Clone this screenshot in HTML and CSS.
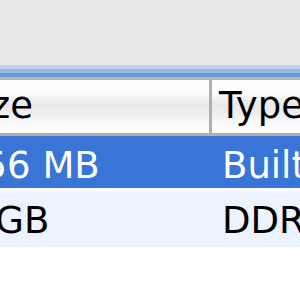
FILE: index.html
```html
<!doctype html>
<html lang="en">
    <head>
        <meta charset="UTF-8" />
        <title>Memory</title>
        <link rel="stylesheet" href="styles.css">
    </head>
    <body>
        <div class="window">
            <div class="toolbar"></div>
            <div class="focus-ring"></div>
            <div class="table">
                <div class="thead">
                    <div class="th size">Size</div>
                    <div class="th">Type</div>
                </div>
                <div class="row selected">
                    <div class="td">256 MB</div>
                    <div class="td">Built-in</div>
                </div>
                <div class="row striped">
                    <div class="td">2 GB</div>
                    <div class="td">DDR2 SDRAM</div>
                </div>
            </div>
        </div>
    </body>
</html>
```

FILE: styles.css
```css
body {
    margin: 0;
    font-family: "DejaVu Sans", sans-serif;
    font-size: 37px;
    background: #fff;
}
.window {
    width: 300px;
    height: 300px;
    overflow: hidden;
    background: #fff;
}
.toolbar {
    height: 65px;
    background: #e8e8e8;
}
.focus-ring {
    height: 12px;
    background: linear-gradient(#bfd3ef 0, #bfd3ef 4px, #97b7e5 4px, #97b7e5 8px, #6c98da 8px);
}
.table {
    width: 620px;
    margin-left: -50px;
    white-space: nowrap;
}
.thead,
.row {
    display: grid;
    grid-template-columns: 262px 1fr;
    line-height: 43px;
}
.thead {
    border-top: 3px solid #b6b6b6;
    border-bottom: 3px solid #b0b0b0;
    background: linear-gradient(#fff 0%, #fbfbfb 25%, #e9e9e9 45%, #ebebeb 58%, #f7f7f7 78%, #fff 100%);
    color: #000;
}
.th {
    padding: 4px 0 6px 7px;
}
.th.size {
    border-right: 3px solid #b0b0b0;
}
.td {
    padding-left: 10px;
}
.selected {
    background: #3875d7;
    color: #fff;
    padding: 8px 0 1px;
    margin-bottom: 3px;
}
.striped {
    background: #edf3fe;
    color: #000;
    padding: 8px 0 5px;
}
```
